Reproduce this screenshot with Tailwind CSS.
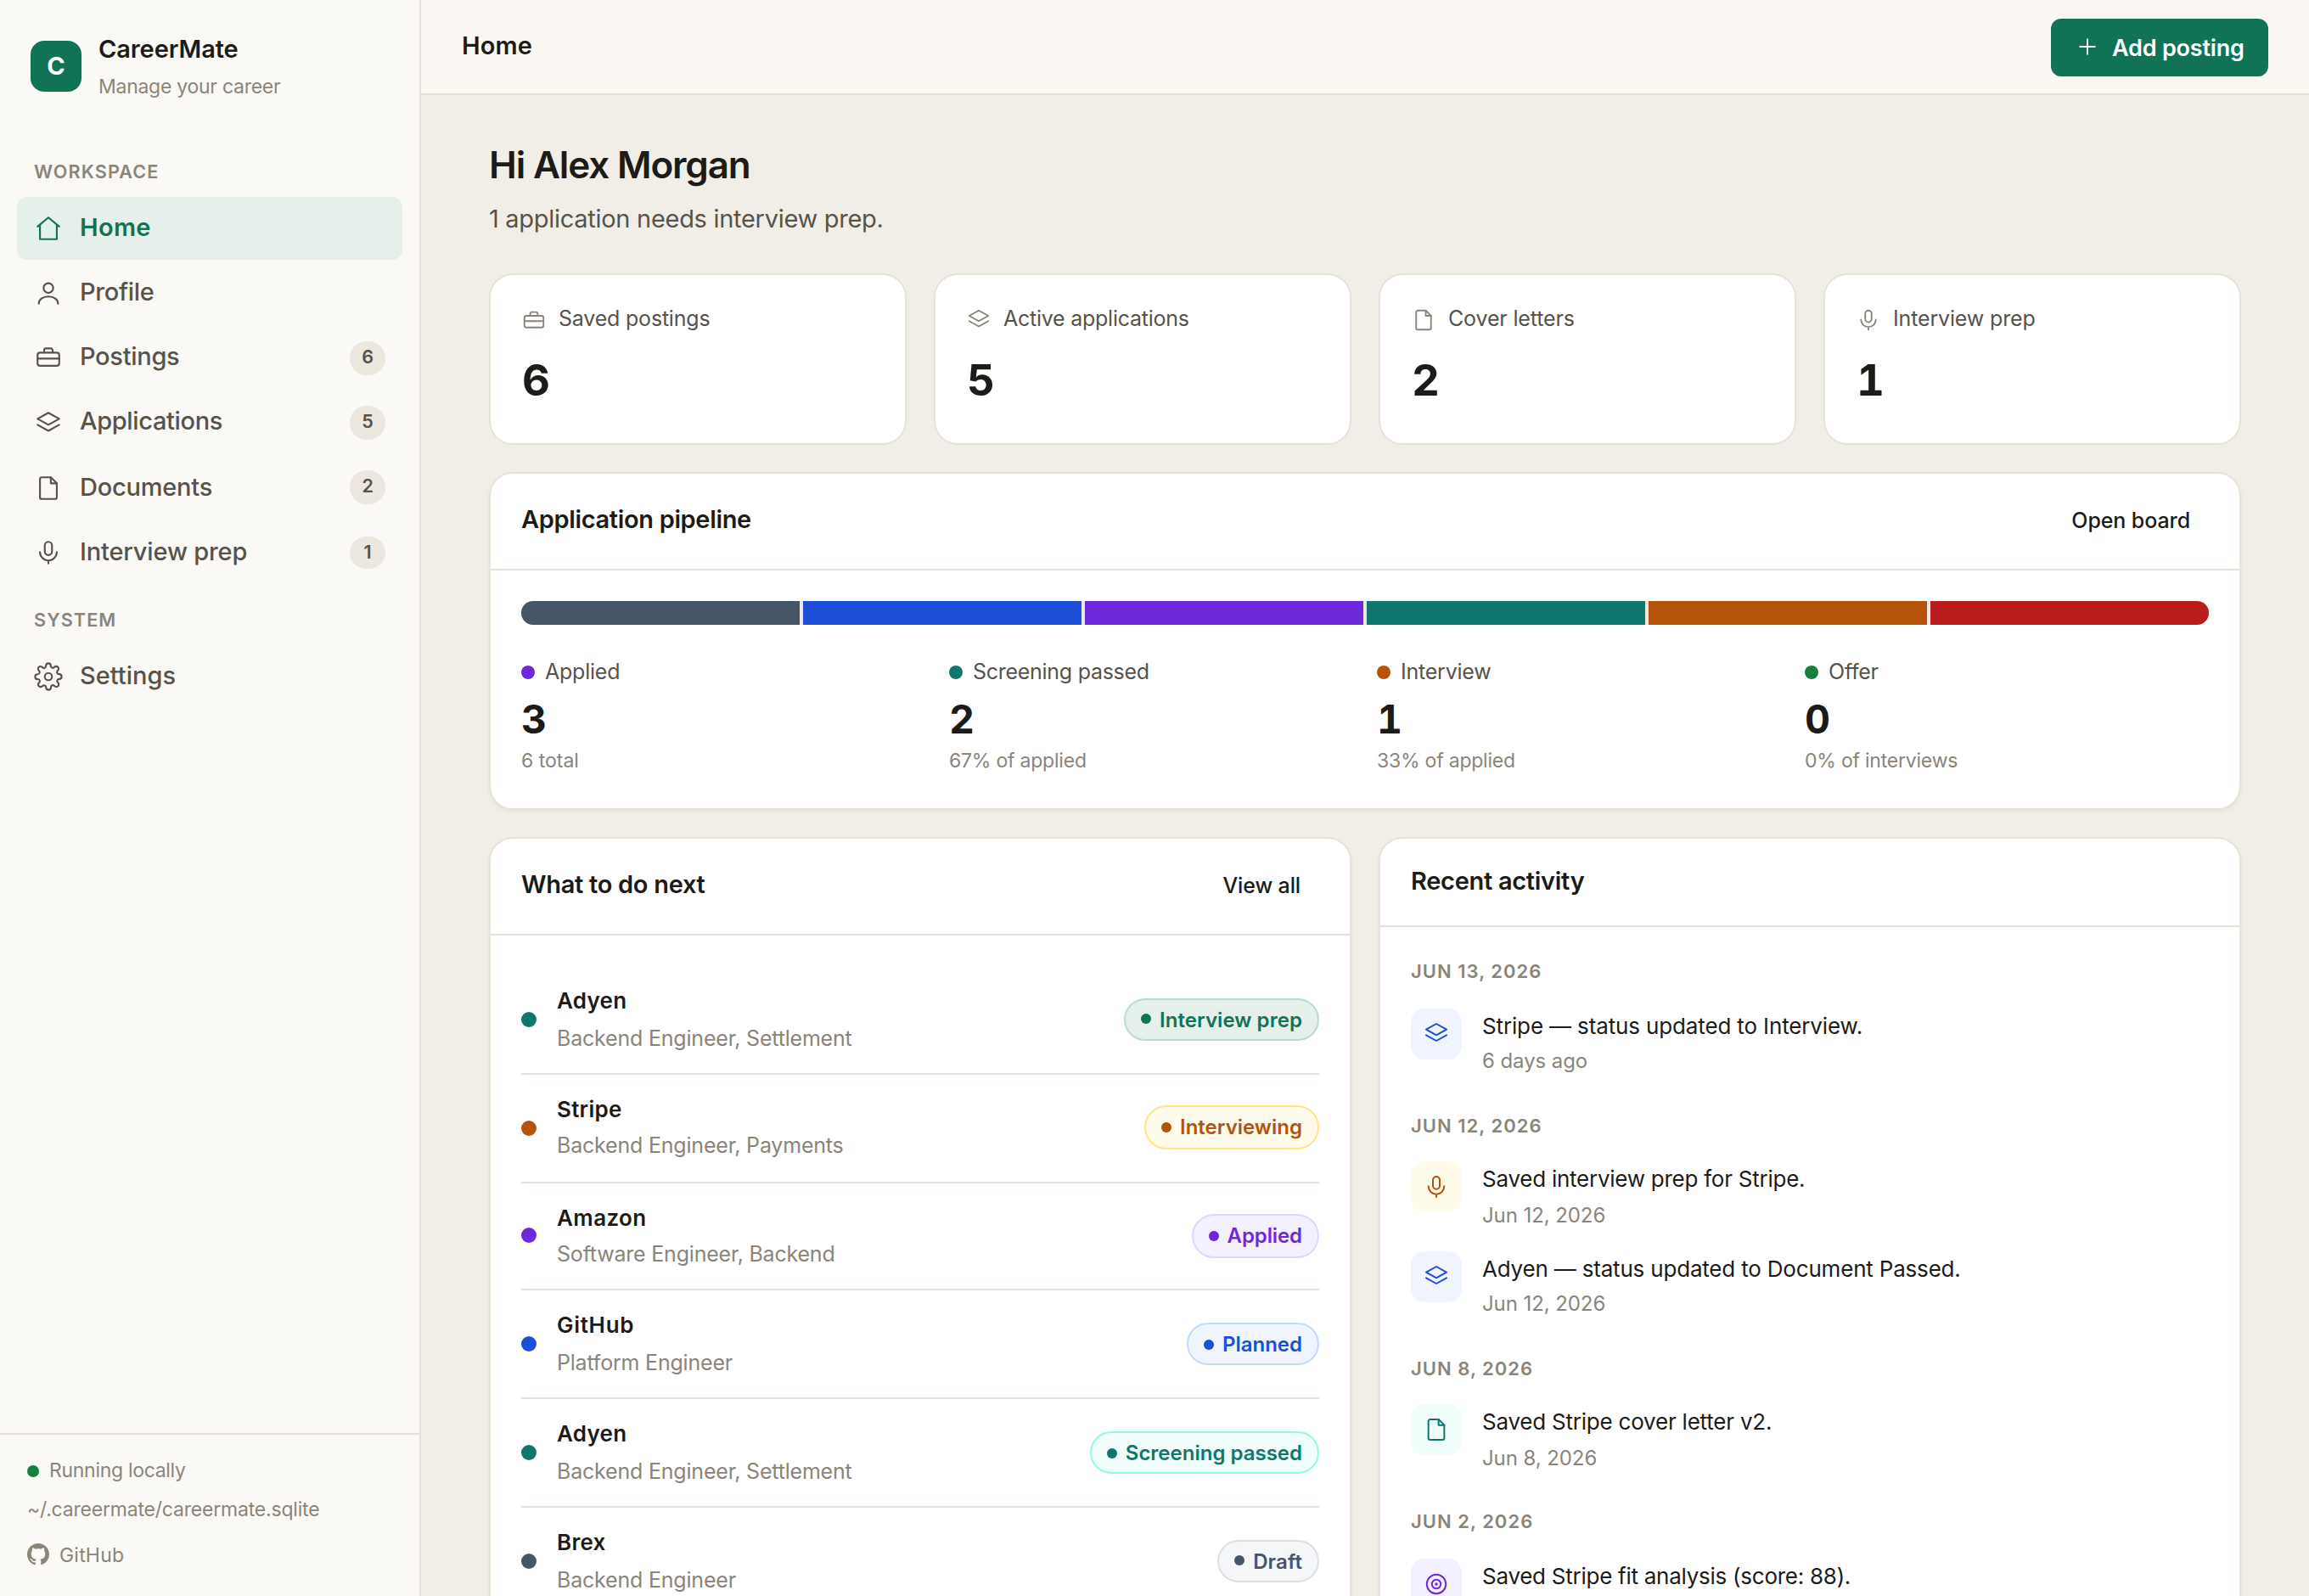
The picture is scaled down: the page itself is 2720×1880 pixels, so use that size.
<!DOCTYPE html>
<html lang="en">
<head>
<meta charset="utf-8">
<title>CareerMate</title>
<script src="https://cdn.jsdelivr.net/npm/@tailwindcss/browser@4"></script>
</head>
<body class="h-[1880px] w-[2720px] overflow-hidden bg-[#f1eee7] font-['Inter',sans-serif] text-[#1c1b17]">

<!-- Icon set, 24-unit grid -->
<svg class="hidden" xmlns="http://www.w3.org/2000/svg">
  <symbol id="home" viewBox="0 0 24 24"><path d="M3 10.5 12 3l9 7.5"/><path d="M5 9.2V21h14V9.2"/></symbol>
  <symbol id="user" viewBox="0 0 24 24"><circle cx="12" cy="8" r="4"/><path d="M4 21c0-3.6 3.4-6 8-6s8 2.4 8 6"/></symbol>
  <symbol id="briefcase" viewBox="0 0 24 24"><rect x="3" y="8" width="18" height="11" rx="2"/><path d="M8.5 8V6a1.5 1.5 0 0 1 1.5-1.5h4A1.5 1.5 0 0 1 15.5 6v2M3 13h18"/></symbol>
  <symbol id="layers" viewBox="0 0 24 24"><path d="m12 3 9 5-9 5-9-5z"/><path d="m3 13 9 5 9-5"/></symbol>
  <symbol id="file" viewBox="0 0 24 24"><path d="M14 3H6.5A1.5 1.5 0 0 0 5 4.5v15A1.5 1.5 0 0 0 6.5 21h11a1.5 1.5 0 0 0 1.5-1.5V8z"/><path d="M14 3v5h5"/></symbol>
  <symbol id="mic" viewBox="0 0 24 24"><rect x="9" y="3" width="6" height="11" rx="3"/><path d="M5 11.5a7 7 0 0 0 14 0M12 18.5V21"/></symbol>
  <symbol id="gear" viewBox="0 0 24 24"><circle cx="12" cy="12" r="3"/><path d="M19.4 15a1.7 1.7 0 0 0 .3 1.8l.1.1a2 2 0 1 1-2.8 2.8l-.1-.1a1.7 1.7 0 0 0-1.8-.3 1.7 1.7 0 0 0-1 1.5V21a2 2 0 1 1-4 0v-.1a1.7 1.7 0 0 0-1.1-1.5 1.7 1.7 0 0 0-1.8.3l-.1.1a2 2 0 1 1-2.8-2.8l.1-.1a1.7 1.7 0 0 0 .3-1.8 1.7 1.7 0 0 0-1.5-1H3a2 2 0 1 1 0-4h.1a1.7 1.7 0 0 0 1.5-1.1 1.7 1.7 0 0 0-.3-1.8l-.1-.1a2 2 0 1 1 2.8-2.8l.1.1a1.7 1.7 0 0 0 1.8.3H9a1.7 1.7 0 0 0 1-1.5V3a2 2 0 1 1 4 0v.1a1.7 1.7 0 0 0 1 1.5 1.7 1.7 0 0 0 1.8-.3l.1-.1a2 2 0 1 1 2.8 2.8l-.1.1a1.7 1.7 0 0 0-.3 1.8V9a1.7 1.7 0 0 0 1.5 1H21a2 2 0 1 1 0 4h-.1a1.7 1.7 0 0 0-1.5 1z"/></symbol>
  <symbol id="target" viewBox="0 0 24 24"><circle cx="12" cy="12" r="8.4"/><circle cx="12" cy="12" r="3.9"/><circle cx="12" cy="12" r=".6"/></symbol>
  <symbol id="plus" viewBox="0 0 24 24"><path d="M12 5v14M5 12h14"/></symbol>
</svg>

<div class="flex h-[1880px] w-[2720px]">

  <!-- Sidebar -->
  <aside class="flex h-full w-[496px] shrink-0 flex-col border-r-2 border-[#e6e0d6] bg-[#faf9f5]">
    <div class="flex h-[187px] gap-5 pl-9">
      <div class="mt-12 h-[60px] w-[60px] rounded-2xl bg-[#107356] text-center text-[29px] leading-[59px] font-bold text-white">C</div>
      <div class="pt-[39px]">
        <div class="text-[29px] leading-[37px] font-semibold tracking-[-0.1px]">CareerMate</div>
        <div class="mt-[10px] text-[23px] leading-[32px] tracking-[-0.27px] text-[#8a8578]">Manage your career</div>
      </div>
    </div>
    <div class="mb-[15px] pl-10 text-[21.6px] leading-[30px] font-semibold tracking-[1.1px] text-[#8a8578]">WORKSPACE</div>
    <nav class="flex flex-col gap-[2px] px-5 text-[29px] leading-[71px] font-medium tracking-[-0.3px] text-[#57524a]">
      <a class="flex h-[74px] rounded-xl bg-[#e6f0ea] px-5 font-semibold text-[#107356]">
        <svg class="mt-5 mr-5 h-[34px] w-[34px] fill-none stroke-current stroke-[1.5]" stroke-linecap="round" stroke-linejoin="round"><use href="#home"/></svg><span class="tracking-[0.3px]">Home</span>
      </a>
      <a class="flex h-[74px] px-5">
        <svg class="mt-5 mr-5 h-[34px] w-[34px] fill-none stroke-current stroke-[1.5]" stroke-linecap="round" stroke-linejoin="round"><use href="#user"/></svg><span>Profile</span>
      </a>
      <a class="flex h-[74px] px-5">
        <svg class="mt-5 mr-5 h-[34px] w-[34px] fill-none stroke-current stroke-[1.5]" stroke-linecap="round" stroke-linejoin="round"><use href="#briefcase"/></svg><span>Postings</span>
        <span class="mt-[18px] ml-auto h-10 w-[42px] rounded-full bg-[#ece8e0] text-center text-[21.6px] leading-[36px] font-semibold">6</span>
      </a>
      <a class="flex h-[74px] px-5">
        <svg class="mt-[22px] mr-5 h-[34px] w-[34px] fill-none stroke-current stroke-[1.5]" stroke-linecap="round" stroke-linejoin="round"><use href="#layers"/></svg><span class="tracking-[-0.35px]">Applications</span>
        <span class="mt-[18px] ml-auto h-10 w-[42px] rounded-full bg-[#ece8e0] text-center text-[21.6px] leading-[36px] font-semibold">5</span>
      </a>
      <a class="flex h-[74px] px-5">
        <svg class="mt-[22px] mr-5 h-[34px] w-[34px] fill-none stroke-current stroke-[1.5]" stroke-linecap="round" stroke-linejoin="round"><use href="#file"/></svg><span class="leading-[75px] tracking-[-0.22px]">Documents</span>
        <span class="mt-[18px] ml-auto h-10 w-[42px] rounded-full bg-[#ece8e0] text-center text-[21.6px] leading-[36px] font-semibold">2</span>
      </a>
      <a class="mt-[2px] flex h-[74px] px-5">
        <svg class="mt-5 mr-5 h-[34px] w-[34px] fill-none stroke-current stroke-[1.5]" stroke-linecap="round" stroke-linejoin="round"><use href="#mic"/></svg><span class="tracking-[-0.16px]">Interview prep</span>
        <span class="mt-[18px] ml-auto h-[38px] w-[42px] rounded-full bg-[#ece8e0] text-center text-[21.6px] leading-[36px] font-semibold">1</span>
      </a>
    </nav>
    <div class="mt-[27px] mb-[15px] pl-10 text-[21.6px] leading-[30px] font-semibold tracking-[1.1px] text-[#8a8578]">SYSTEM</div>
    <nav class="px-5 text-[29px] leading-[71px] font-medium text-[#57524a]">
      <a class="flex h-[74px] px-5">
        <svg class="mt-5 mr-5 h-[34px] w-[34px] fill-none stroke-current stroke-[1.5]" stroke-linecap="round" stroke-linejoin="round"><use href="#gear"/></svg><span>Settings</span>
      </a>
    </nav>
    <div class="mt-auto border-t-2 border-[#e6e0d6] px-8 pt-[26px] pb-8 text-[23px] leading-[32px] text-[#8a8578]">
      <div class="flex gap-3"><span class="mt-[10px] h-[14px] w-[14px] rounded-full bg-[#15803d]"></span><span class="tracking-[-0.3px]">Running locally</span></div>
      <div class="mt-[14px] tracking-[-0.2px]">~/.careermate/careermate.sqlite</div>
      <div class="mt-[22px] flex gap-3">
        <svg class="mt-[2px] h-[26px] w-[26px] fill-current" viewBox="0 0 16 16"><path d="M8 0C3.58 0 0 3.58 0 8c0 3.54 2.29 6.53 5.47 7.59.4.07.55-.17.55-.38 0-.19-.01-.82-.01-1.49-2.01.37-2.53-.49-2.69-.94-.09-.23-.48-.94-.82-1.13-.28-.15-.68-.52-.01-.53.63-.01 1.08.58 1.23.82.72 1.21 1.87.87 2.33.66.07-.52.28-.87.51-1.07-1.78-.2-3.64-.89-3.64-3.95 0-.87.31-1.59.82-2.15-.08-.2-.36-1.02.08-2.12 0 0 .67-.21 2.2.82.64-.18 1.32-.27 2-.27s1.36.09 2 .27c1.53-1.04 2.2-.82 2.2-.82.44 1.1.16 1.92.08 2.12.51.56.82 1.27.82 2.15 0 3.07-1.87 3.75-3.65 3.95.29.25.54.73.54 1.48 0 1.07-.01 1.93-.01 2.2 0 .21.15.46.55.38A8.01 8.01 0 0 0 16 8c0-4.42-3.58-8-8-8z"/></svg>
        <span class="tracking-[0.2px]">GitHub</span>
      </div>
    </div>
  </aside>

  <div class="flex min-w-0 flex-1 flex-col">
    <!-- Top bar -->
    <header class="flex h-28 shrink-0 justify-between border-b-2 border-[#e6e2d6] bg-[#fbf8f3] px-12">
      <h2 class="pt-[35px] text-[29px] leading-[37px] font-semibold tracking-[0.1px]">Home</h2>
      <button class="mt-[22px] flex h-[68px] w-[256px] gap-[14px] rounded-xl bg-[#107356] pl-7 text-[27px] font-semibold text-white">
        <svg class="mt-[18px] h-[30px] w-[30px] fill-none stroke-current stroke-[1.5]" stroke-linecap="round"><use href="#plus"/></svg>
        <span class="pt-[1px] leading-[67px] tracking-[-0.2px]">Add posting</span>
      </button>
    </header>

    <main class="px-20 pt-14">
      <h1 class="text-[44px] leading-[52px] font-semibold tracking-[-1.15px]">Hi Alex Morgan</h1>
      <p class="mt-[19px] text-[29px] leading-[37px] tracking-[-0.29px] text-[#57524a]">1 application needs interview prep.</p>

      <!-- Stats -->
      <section class="mt-[46px] grid grid-cols-4 gap-8">
        <div class="h-[202px] rounded-[28px] border-2 border-[#e6e2d6] bg-white px-9 pt-9">
          <div class="flex gap-[14px] text-[25px] leading-[30px] tracking-[-0.2px] text-[#57524a]"><svg class="mt-[2px] h-[30px] w-[30px] fill-none stroke-[#8a8578] stroke-[1.5]" stroke-linecap="round" stroke-linejoin="round"><use href="#briefcase"/></svg>Saved postings</div>
          <div class="mt-[25px] pl-px text-[51px] leading-[61px] font-bold tabular-nums">6</div>
        </div>
        <div class="h-[202px] rounded-[28px] border-2 border-[#e6e2d6] bg-white px-9 pt-9">
          <div class="flex gap-[14px] text-[25px] leading-[30px] tracking-[-0.25px] text-[#57524a]"><svg class="mt-[2px] h-[30px] w-[30px] fill-none stroke-[#8a8578] stroke-[1.5]" stroke-linecap="round" stroke-linejoin="round"><use href="#layers"/></svg>Active applications</div>
          <div class="mt-[25px] pl-px text-[51px] leading-[61px] font-bold tabular-nums">5</div>
        </div>
        <div class="h-[202px] rounded-[28px] border-2 border-[#e6e2d6] bg-white px-9 pt-9">
          <div class="flex gap-[14px] text-[25px] leading-[30px] tracking-[-0.15px] text-[#57524a]"><svg class="mt-[2px] h-[30px] w-[30px] fill-none stroke-[#8a8578] stroke-[1.5]" stroke-linecap="round" stroke-linejoin="round"><use href="#file"/></svg>Cover letters</div>
          <div class="mt-[25px] pl-px text-[51px] leading-[61px] font-bold tabular-nums">2</div>
        </div>
        <div class="h-[202px] rounded-[28px] border-2 border-[#e6e2d6] bg-white px-9 pt-9">
          <div class="flex gap-[14px] text-[25px] leading-[30px] tracking-[-0.15px] text-[#57524a]"><svg class="mt-[2px] h-[30px] w-[30px] fill-none stroke-[#8a8578] stroke-[1.5]" stroke-linecap="round" stroke-linejoin="round"><use href="#mic"/></svg>Interview prep</div>
          <div class="mt-[25px] pl-px text-[51px] leading-[61px] font-bold tabular-nums">1</div>
        </div>
      </section>

      <!-- Pipeline -->
      <section class="mt-8 h-[398px] rounded-[28px] border-2 border-[#e6e2d6] bg-white shadow-[0_2px_4px_rgba(28,27,23,0.05)]">
        <div class="flex h-[114px] justify-between border-b-2 border-[#e6e2d6] px-9">
          <h3 class="pt-9 text-[29px] leading-[35px] font-semibold tracking-[-0.35px]">Application pipeline</h3>
          <span class="pt-10 pr-[22px] text-[25px] leading-[30px] font-medium tracking-[-0.1px]">Open board</span>
        </div>
        <div class="px-9 pt-9">
          <div class="flex h-7 gap-1 overflow-hidden rounded-full bg-[#ece8e0]">
            <div class="flex-1 bg-[#475569]"></div>
            <div class="flex-1 bg-[#1d4ed8]"></div>
            <div class="flex-1 bg-[#6d28d9]"></div>
            <div class="flex-1 bg-[#0f766e]"></div>
            <div class="flex-1 bg-[#b45309]"></div>
            <div class="flex-1 bg-[#b91c1c]"></div>
          </div>
          <div class="mt-10 grid grid-cols-4 gap-7 text-[23px] leading-[32px] tracking-[-0.22px] text-[#8a8578]">
            <div>
              <div class="flex gap-3 text-[25px] leading-[30px] text-[#57524a]"><span class="mt-2 h-4 w-4 rounded-full bg-[#6d28d9]"></span>Applied</div>
              <div class="mt-4 mb-2 text-[46.5px] leading-[50px] font-bold tracking-normal text-[#1c1b17] tabular-nums">3</div>
              <div class="tracking-normal">6 total</div>
            </div>
            <div>
              <div class="flex gap-3 text-[25px] leading-[30px] tracking-[-0.28px] text-[#57524a]"><span class="mt-2 h-4 w-4 rounded-full bg-[#0f766e]"></span>Screening passed</div>
              <div class="mt-4 mb-2 text-[46.5px] leading-[50px] font-bold tracking-normal text-[#1c1b17] tabular-nums">2</div>
              <div>67% of applied</div>
            </div>
            <div>
              <div class="flex gap-3 text-[25px] leading-[30px] text-[#57524a]"><span class="mt-2 h-4 w-4 rounded-full bg-[#b45309]"></span>Interview</div>
              <div class="mt-4 mb-2 text-[46.5px] leading-[50px] font-bold tracking-normal text-[#1c1b17] tabular-nums">1</div>
              <div>33% of applied</div>
            </div>
            <div>
              <div class="flex gap-3 text-[25px] leading-[30px] text-[#57524a]"><span class="mt-2 h-4 w-4 rounded-full bg-[#15803d]"></span>Offer</div>
              <div class="mt-4 mb-2 text-[46.5px] leading-[50px] font-bold tracking-normal text-[#1c1b17] tabular-nums">0</div>
              <div>0% of interviews</div>
            </div>
          </div>
        </div>
      </section>

      <div class="mt-8 grid grid-cols-2 gap-8">
        <!-- What to do next -->
        <section class="h-[960px] rounded-[28px] border-2 border-[#e6e2d6] bg-white shadow-[0_2px_4px_rgba(28,27,23,0.05)]">
          <div class="flex h-[114px] justify-between border-b-2 border-[#e6e2d6] px-9">
            <h3 class="pt-9 text-[29px] leading-[35px] font-semibold tracking-[-0.3px]">What to do next</h3>
            <span class="pt-10 pr-[22px] text-[25px] leading-[30px] font-medium tracking-[-0.12px]">View all</span>
          </div>
          <ul class="px-9 pt-9 text-[25px] leading-[30px] tracking-[-0.2px] text-[#8a8578]">
            <li class="flex h-32 border-b-2 border-[#e6e2d6]">
              <span class="mt-[54px] mr-6 h-[18px] w-[18px] rounded-full bg-[#0f766e]"></span>
              <div class="pt-[25px]"><div class="mb-[14px] text-[26px] leading-[31px] font-semibold tracking-[0.25px] text-[#1c1b17]">Adyen</div>Backend Engineer, Settlement</div>
              <div class="mt-[38px] ml-auto flex h-[50px] gap-[10px] rounded-full border-2 border-[#b9dccb] bg-[#e6f0ea] px-[18px] text-[24px] leading-[47px] font-semibold tracking-[0.06px] text-[#107356]"><span class="mt-4 h-3 w-3 rounded-full bg-current"></span>Interview prep</div>
            </li>
            <li class="flex h-32 border-b-2 border-[#e6e2d6]">
              <span class="mt-[54px] mr-6 h-[18px] w-[18px] rounded-full bg-[#b45309]"></span>
              <div class="pt-[25px]"><div class="mb-3 text-[26px] leading-[31px] font-semibold tracking-[0.25px] text-[#1c1b17]">Stripe</div>Backend Engineer, Payments</div>
              <div class="mt-9 ml-auto flex h-[52px] gap-[10px] rounded-full border-2 border-[#fde68a] bg-[#fffbeb] px-[18px] text-[24px] leading-[47px] font-semibold tracking-normal text-[#b45309]"><span class="mt-[18px] h-3 w-3 rounded-full bg-current"></span>Interviewing</div>
            </li>
            <li class="flex h-[126px] border-b-2 border-[#e6e2d6]">
              <span class="mt-[52px] mr-6 h-[18px] w-[18px] rounded-full bg-[#6d28d9]"></span>
              <div class="pt-[25px]"><div class="mb-3 text-[26px] leading-[31px] font-semibold tracking-[0.4px] text-[#1c1b17]">Amazon</div>Software Engineer, Backend</div>
              <div class="mt-9 ml-auto flex h-[52px] gap-[10px] rounded-full border-2 border-[#ddd6fe] bg-[#f4f0ff] px-[18px] text-[24px] leading-[47px] font-semibold tracking-[-0.1px] text-[#6d28d9]"><span class="mt-[18px] h-3 w-3 rounded-full bg-current"></span>Applied</div>
            </li>
            <li class="flex h-32 border-b-2 border-[#e6e2d6]">
              <span class="mt-[54px] mr-6 h-[18px] w-[18px] rounded-full bg-[#1d4ed8]"></span>
              <div class="pt-[25px]"><div class="mb-[14px] text-[26px] leading-[31px] font-semibold tracking-[0.7px] text-[#1c1b17]">GitHub</div>Platform Engineer</div>
              <div class="mt-[38px] ml-auto flex h-[50px] gap-[10px] rounded-full border-2 border-[#bfdbfe] bg-[#eff4ff] px-[18px] text-[24px] leading-[47px] font-semibold tracking-normal text-[#1d4ed8]"><span class="mt-[18px] h-3 w-3 rounded-full bg-current"></span>Planned</div>
            </li>
            <li class="flex h-32 border-b-2 border-[#e6e2d6]">
              <span class="mt-[54px] mr-6 h-[18px] w-[18px] rounded-full bg-[#0f766e]"></span>
              <div class="pt-[25px]"><div class="mb-[14px] text-[26px] leading-[31px] font-semibold tracking-[0.25px] text-[#1c1b17]">Adyen</div>Backend Engineer, Settlement</div>
              <div class="mt-[38px] ml-auto flex h-[50px] gap-[10px] rounded-full border-2 border-[#99f6e4] bg-[#f0fdfa] px-[18px] text-[24px] leading-[47px] font-semibold tracking-normal text-[#0f766e]"><span class="mt-[18px] h-3 w-3 rounded-full bg-current"></span>Screening passed</div>
            </li>
            <li class="flex h-32">
              <span class="mt-[54px] mr-6 h-[18px] w-[18px] rounded-full bg-[#475569]"></span>
              <div class="pt-[25px]"><div class="mb-[14px] text-[26px] leading-[31px] font-semibold tracking-[0.25px] text-[#1c1b17]">Brex</div>Backend Engineer</div>
              <div class="mt-[38px] ml-auto flex h-[50px] gap-[10px] rounded-full border-2 border-[#dbe0e7] bg-[#f4f6f8] px-[18px] text-[24px] leading-[47px] font-semibold tracking-[0.1px] text-[#475569]"><span class="mt-4 h-3 w-3 rounded-full bg-current"></span>Draft</div>
            </li>
          </ul>
        </section>

        <!-- Recent activity -->
        <section class="h-[960px] rounded-[28px] border-2 border-[#e6e2d6] bg-white shadow-[0_2px_4px_rgba(28,27,23,0.05)]">
          <div class="h-[104px] border-b-2 border-[#e6e2d6] px-9 pt-8 text-[29px] leading-[35px] font-semibold tracking-[-0.3px]">Recent activity</div>
          <div class="px-9 pt-[39px] text-[24px] leading-[29px] tracking-[-0.08px] text-[#8a8578]">
            <div class="mb-[31px] text-[22px] leading-[26px] font-semibold tracking-[1.02px]">JUN 13, 2026</div>
            <div class="flex h-[125px] gap-6">
              <div class="flex h-[60px] w-[60px] items-center justify-center rounded-2xl bg-[#eff4ff] text-[#1d4ed8]"><svg class="h-8 w-8 fill-none stroke-current stroke-[1.5]" stroke-linecap="round" stroke-linejoin="round"><use href="#layers"/></svg></div>
              <div class="pt-[5px]"><div class="mb-[11px] text-[26px] leading-[31px] tracking-[-0.14px] text-[#1c1b17]">Stripe — status updated to Interview.</div>6 days ago</div>
            </div>
            <div class="mb-[29px] text-[22px] leading-[26px] font-semibold tracking-[1.02px]">JUN 12, 2026</div>
            <div class="flex h-[106px] gap-6">
              <div class="flex h-[60px] w-[60px] items-center justify-center rounded-2xl bg-[#fffbeb] text-[#b45309]"><svg class="h-8 w-8 fill-none stroke-current stroke-[1.5]" stroke-linecap="round" stroke-linejoin="round"><use href="#mic"/></svg></div>
              <div class="pt-[5px]"><div class="mb-[13px] text-[26px] leading-[31px] tracking-[-0.25px] text-[#1c1b17]">Saved interview prep for Stripe.</div>Jun 12, 2026</div>
            </div>
            <div class="flex h-[125px] gap-6">
              <div class="flex h-[60px] w-[60px] items-center justify-center rounded-2xl bg-[#eff4ff] text-[#1d4ed8]"><svg class="h-8 w-8 fill-none stroke-current stroke-[1.5]" stroke-linecap="round" stroke-linejoin="round"><use href="#layers"/></svg></div>
              <div class="pt-[5px]"><div class="mb-[11px] text-[26px] leading-[31px] tracking-[-0.19px] text-[#1c1b17]">Adyen — status updated to Document Passed.</div>Jun 12, 2026</div>
            </div>
            <div class="mb-[29px] text-[22px] leading-[26px] font-semibold tracking-[1.02px]">JUN 8, 2026</div>
            <div class="flex h-[125px] gap-6">
              <div class="flex h-[60px] w-[60px] items-center justify-center rounded-2xl bg-[#f0fdfa] text-[#0f766e]"><svg class="h-8 w-8 fill-none stroke-current stroke-[1.5]" stroke-linecap="round" stroke-linejoin="round"><use href="#file"/></svg></div>
              <div class="pt-[5px]"><div class="mb-[13px] text-[26px] leading-[31px] tracking-[-0.22px] text-[#1c1b17]">Saved Stripe cover letter v2.</div>Jun 8, 2026</div>
            </div>
            <div class="mb-[31px] text-[22px] leading-[26px] font-semibold tracking-[1.02px]">JUN 2, 2026</div>
            <div class="flex h-[125px] gap-6">
              <div class="flex h-[60px] w-[60px] items-center justify-center rounded-2xl bg-[#f4f0ff] text-[#6d28d9]"><svg class="h-8 w-8 fill-none stroke-current stroke-[1.5]" stroke-linecap="round" stroke-linejoin="round"><use href="#target"/></svg></div>
              <div class="pt-[5px] text-[26px] leading-[31px] tracking-[-0.26px] text-[#1c1b17]">Saved Stripe fit analysis (score: 88).</div>
            </div>
          </div>
        </section>
      </div>
    </main>
  </div>
</div>
</body>
</html>
